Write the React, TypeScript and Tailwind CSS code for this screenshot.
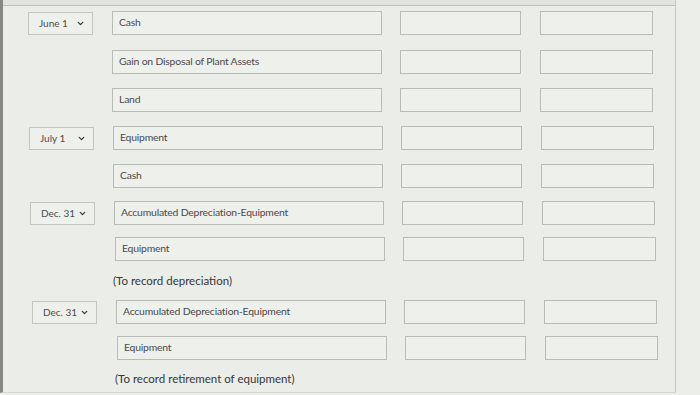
import { ChevronDown } from 'lucide-react';

type Entry = { date?: string; account: string; indent: number; mt: string };
type Note = { note: string; indent: number; mt: string };

const rows: (Entry | Note)[] = [
  { date: 'June 1', account: 'Cash', indent: 0, mt: 'mt-[5px]' },
  { account: 'Gain on Disposal of Plant Assets', indent: 0, mt: 'mt-[15px]' },
  { account: 'Land', indent: 0, mt: 'mt-[14px]' },
  { date: 'July 1', account: 'Equipment', indent: 1, mt: 'mt-[14px]' },
  { account: 'Cash', indent: 1, mt: 'mt-[14px]' },
  { date: 'Dec. 31', account: 'Accumulated Depreciation-Equipment', indent: 2, mt: 'mt-[13px]' },
  { account: 'Equipment', indent: 3, mt: 'mt-[12px]' },
  { note: '(To record depreciation)', indent: 1, mt: 'mt-[10px]' },
  { date: 'Dec. 31', account: 'Accumulated Depreciation-Equipment', indent: 4, mt: 'mt-[9px]' },
  { account: 'Equipment', indent: 5, mt: 'mt-[12px]' },
  { note: '(To record retirement of equipment)', indent: 3, mt: 'mt-[9px]' },
];

const indentCls = ['pl-[0px]', 'pl-[1px]', 'pl-[2px]', 'pl-[3px]', 'pl-[4px]', 'pl-[5px]'];

const App = () => {
  return (
    <div
      className="w-[700px] h-[395px] bg-[#eceee9] overflow-hidden"
      style={{ fontFamily: 'Lato, "Open Sans", sans-serif' }}
    >
      <div className="relative w-[676px] h-[393px] border-l-[3px] border-l-[#868982] border-r border-r-[#c5c8c0] border-b border-b-[#d4d6d0] bg-[#ebede8]">
        <div className="h-[6px] border-b border-[#bfc2b9] bg-[#e2e5dd]" />
        <div className="flex flex-col">
          {rows.map((r, i) =>
            'note' in r ? (
              <div
                key={i}
                className={`h-[20px] flex items-center text-[11.5px] text-[#363636] ${r.mt} ${indentCls[r.indent]}`}
              >
                <span className="ml-[109px]">{r.note}</span>
              </div>
            ) : (
              <div key={i} className={`flex items-center h-[24px] ${r.mt} ${indentCls[r.indent]}`}>
                <div className="w-[25px] shrink-0" />
                {r.date ? (
                  <div className="w-[65px] h-[23px] shrink-0 flex items-center justify-between pl-[10px] pr-[7px] border border-[#c3c6bf] bg-[#eef0eb] text-[10px] text-[#4d4d4d]">
                    <span>{r.date}</span>
                    <ChevronDown className="w-[9px] h-[9px] text-[#3c3c3c]" strokeWidth={3.5} />
                  </div>
                ) : (
                  <div className="w-[65px] shrink-0" />
                )}
                <div className="w-[19px] shrink-0" />
                <div className="w-[270px] h-[24px] shrink-0 flex items-center pl-[6px] border border-[#b9bcb5] bg-[#eef0eb] text-[10.4px] text-[#4a4a4a] tracking-[-0.2px]">
                  {r.account}
                </div>
                <div className="w-[18px] shrink-0" />
                <div className="w-[121px] h-[24px] shrink-0 border border-[#b9bcb5] bg-[#eef0eb]" />
                <div className="w-[19px] shrink-0" />
                <div className="w-[113px] h-[24px] shrink-0 border border-[#b9bcb5] bg-[#eef0eb]" />
              </div>
            )
          )}
        </div>
      </div>
    </div>
  );
};

export default App;
